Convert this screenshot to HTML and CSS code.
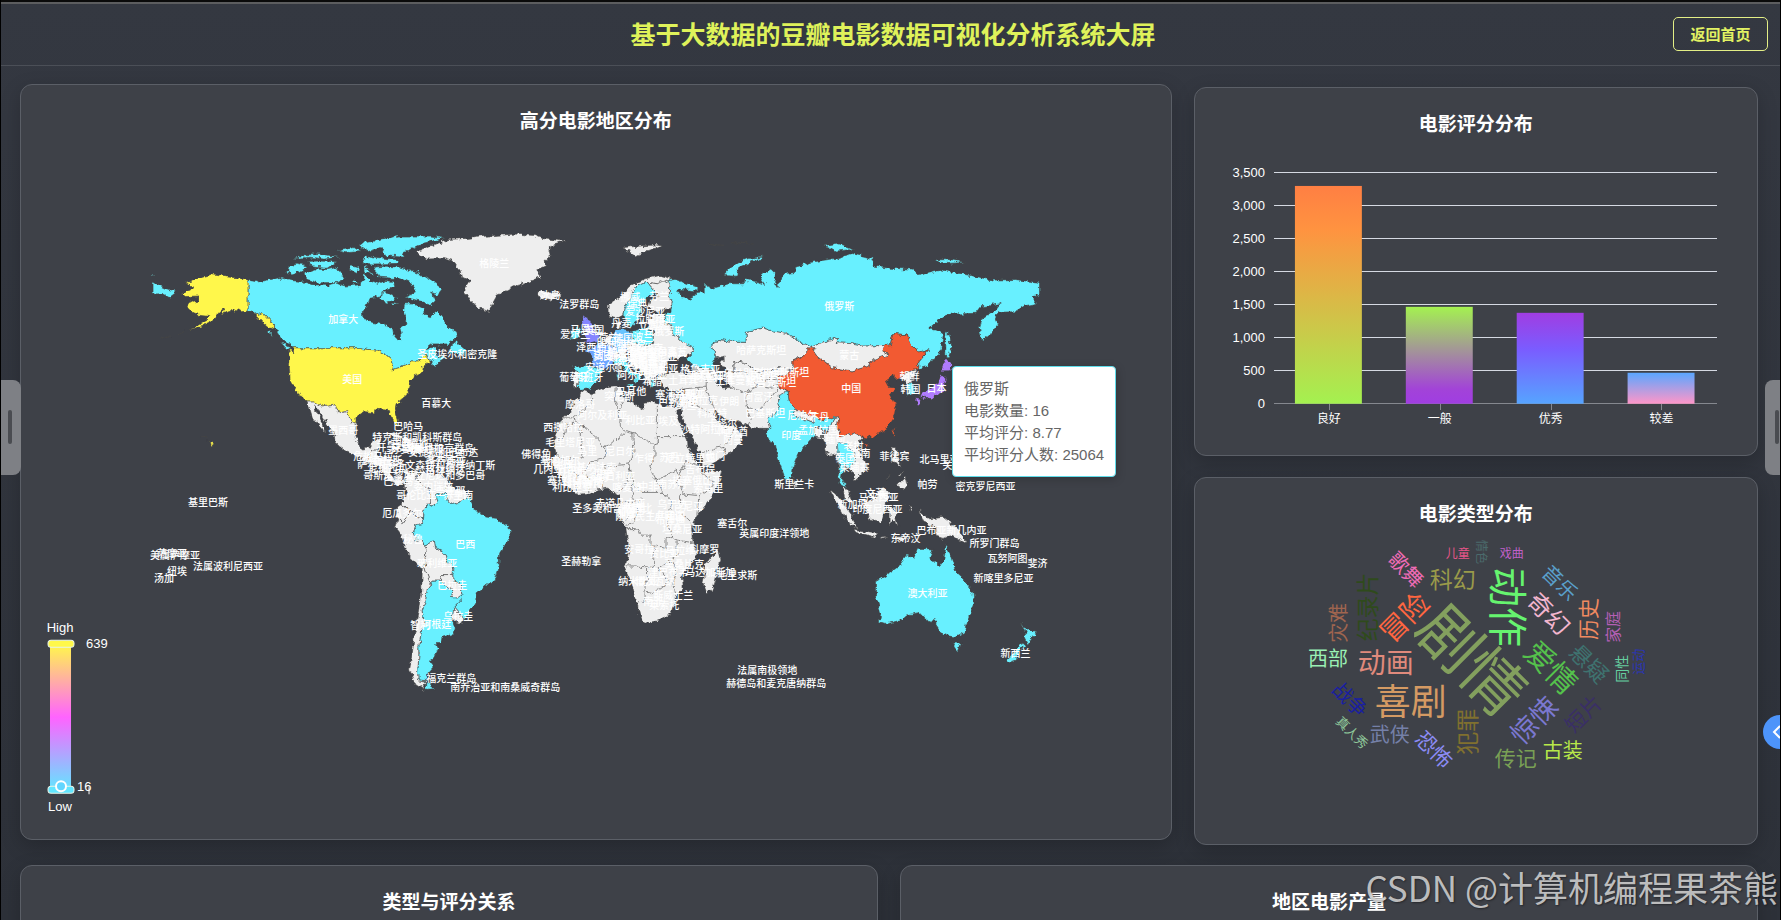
FILE: index.html
```html
<!DOCTYPE html>
<html lang="zh-CN">
<head>
  <meta charset="UTF-8" />
  <meta name="viewport" content="width=device-width, initial-scale=1.0"/>
  <title>基于大数据的豆瓣电影数据可视化分析系统大屏</title>
  <link rel="stylesheet" href="styles.css">
</head>
<body>
  <header class="header">
    <h1>基于大数据的豆瓣电影数据可视化分析系统大屏</h1>
    <button class="back-btn" type="button">返回首页</button>
  </header>

  <main class="main">
    <div class="row row-top">
      <section class="card map-card">
        <h2>高分电影地区分布</h2>
        <svg class="chart" viewBox="45 133 1101 681">
          <defs>
            <filter id="coast" x="-5%" y="-5%" width="110%" height="110%">
              <feTurbulence type="fractalNoise" baseFrequency="0.18" numOctaves="3" seed="4"/>
              <feDisplacementMap in="SourceGraphic" scale="6" xChannelSelector="R" yChannelSelector="G"/>
            </filter>
            <linearGradient id="visual" x1="0" y1="0" x2="0" y2="1">
              <stop offset="0" stop-color="#fff84a"/>
              <stop offset="0.5" stop-color="#ff63ff"/>
              <stop offset="1" stop-color="#62e6ff"/>
            </linearGradient>
          </defs>

          <!-- paths are lon/lat, the group projects them -->
          <g filter="url(#coast)">
            <g class="land" transform="translate(595.5 507.7) scale(2.464 -3.285)">
              <!-- north america -->
              <path class="hot" d="M-141,69.6L-143,70L-148,70.5L-152,70.8L-156.5,71.3L-162,70.2L-163,69.5L-166,68.8L-163.5,67.5L-164,66.6L-168,65.6L-166,64.6L-161,64.8L-161,63.6L-165,62.8L-166,61.5L-164,60L-162,59L-158.5,58.7L-157,58.5L-158,57.5L-161,56L-164.5,54.6L-160,55.5L-156,57.2L-154,58.5L-153.5,59.5L-151.5,61L-150,61.2L-152,59.3L-148.5,60L-146,60.7L-143.5,60L-141,60.2Z"/>
              <path class="low" d="M-141,69.6L-137,69L-133,69.6L-128,70.4L-124,69.5L-119,69.2L-115,68.2L-109,68L-106,68.7L-101,67.8L-96,68.2L-94,69.5L-94,71.8L-91,69.5L-88,68.5L-85.5,69.5L-82,69.2L-81.5,67.5L-86,66.3L-87,64.8L-92,64L-93,62L-94.7,60L-94.5,58.8L-92.5,57L-88,56.5L-82.3,55L-82,53L-80.5,51.5L-79,51.3L-78.8,53L-79.5,54.8L-76.6,56.5L-77,58.5L-78,60.5L-77.6,62.4L-73.5,62.3L-70,61L-69.5,58.9L-67,58.5L-64.6,60.3L-62,57.8L-60,55.5L-57,54L-55.7,52.5L-60,50.2L-66,50.2L-69,48.5L-65,49L-64.5,47.5L-64,46.2L-61,46L-61.5,45.5L-65.5,43.6L-66.5,45L-67.8,45.7L-69,47.3L-70.5,46L-71.5,45L-74.8,45L-76.5,44L-79.2,43.4L-79,42.8L-83,42L-82.4,43.5L-83,45.5L-85,46.8L-88.5,48.3L-92,48.5L-95,49L-123,49L-125,50.5L-127.8,52L-129.5,54L-130,55.5L-131.5,56.7L-133.5,58.4L-135.3,59.7L-137.5,59L-139.5,60.2L-141,60.2Z"/>
              <path class="hot" d="M-141,60.2L-139.5,59.8L-137,58.4L-135,56.8L-132,54.8L-130,55.5L-131.5,56.7L-133.5,58.4L-135.3,59.7L-137.5,59Z"/>
              <path class="low" d="M-128,50.7L-125,49.7L-123.5,48.4L-125.5,48.8ZM-133,54L-131.7,54L-131.2,52.3ZM-59.4,47.8L-57,51L-55.5,50L-53,48.5L-53,46.8L-56,47.2ZM-64,49.8L-62,49.3L-64,49.5Z"/>
              <path class="low" d="M-125,72L-123,71.2L-120,72L-117,73.5L-121,74.4L-124.5,74ZM-117,70.8L-119,71.8L-114,73L-109,72.8L-105,73.6L-102,70L-105,68.9L-113,68.8L-117,69.8ZM-115,73.6L-109,73.2L-105,75.2L-112,75.4L-117,75.3ZM-123,76L-116,76.6L-110,76L-104,76.6L-110,77.4L-118,77.3ZM-100,73L-97,71.6L-96,73.3L-99,74ZM-95,74.7L-93,77L-89,76.5L-80,75.8L-80,74.7L-90,74.5ZM-105,78.8L-100,78L-95,78.3L-98,79.8ZM-96,80L-92,78.3L-87,79.5L-85,77L-78,76.6L-79,78L-74,79.3L-70,80.8L-61,82.4L-67,83L-80,83L-88,82L-94,81.3ZM-94,74L-90,71.3L-94,72ZM-90,73.6L-85,73.8L-80,73.6L-75,72.5L-70,71L-67,69.6L-62,66.8L-64,65L-67,66L-65,63L-66.5,62L-71,63.2L-77.5,64.4L-74,65.5L-73,67.5L-76,69L-79,70L-88,70.5L-89,72ZM-86.5,66L-84,65.8L-80.5,64L-84,63L-87,63.6ZM-98,69.8L-96,69L-99,68.8ZM-83,62.8L-80,62L-82.5,62Z"/>
              <path d="M-73,78.2L-68,79.5L-65,80.5L-60,82L-52,82.3L-44,83L-33,83.6L-25,83.2L-22,82.3L-12,81.4L-18,80.2L-19,78.5L-18.5,77L-21,75.2L-20,74L-24,72.5L-22,70.6L-27,69L-32,68L-37,66L-40,65L-41.5,63L-43,60L-48,61L-51,63.5L-53.5,66.5L-51,69.5L-54.5,70.8L-55,72.5L-58,75.3L-62,76.2L-69,76L-71,77Z"/>
              <path class="hot" d="M-122.8,49L-95,49L-94.6,48.7L-92,48.5L-88.5,48.3L-85,46.8L-83,45.5L-82.4,43.5L-83,42L-79,42.8L-79.2,43.4L-76.5,44L-74.8,45L-71.5,45L-70.5,46L-69,47.4L-67.8,45.7L-67,44.8L-70,43.7L-70.7,42.6L-70,41.8L-74,40.6L-74.2,39.5L-75.5,38.5L-76,37L-75.6,35.3L-77.8,34L-81,32L-81.4,30.5L-80,27L-80.5,25.2L-81.7,26L-82.8,28L-84,30L-89,30.3L-89.5,29.2L-94,29.6L-97.3,27.8L-97.2,26L-99.2,26.5L-101,29.6L-102.8,29.3L-104.5,29.6L-106.5,31.8L-111,31.3L-114.8,32.5L-117.2,32.5L-118.5,34L-120.6,34.6L-122,36.8L-124,39.5L-124.3,42.8L-124,46.3L-124.6,48.3L-122.5,47.5Z"/>
              <path class="hot" d="M-156.3,20.2L-154.8,19.5L-156,18.8ZM-160,22L-158,21.4ZM-167,54L-169,53ZM-176,52L-173,52.4Z"/>
              <path d="M-117.2,32.5L-114.8,32.5L-111,31.3L-106.5,31.8L-104.5,29.6L-102.8,29.3L-101,29.6L-99.2,26.5L-97.2,26L-97.8,22.5L-96,19L-94.5,18.2L-92,18.6L-90.5,20.8L-87,21.5L-88,18.5L-89,17.9L-91,17.8L-92.2,14.6L-96,15.8L-101,17.3L-105.5,20L-105.5,22.5L-109,25.6L-112.5,30L-114.7,31.7L-113,29L-110,24.5L-109.5,23L-112,25L-115,28L-116,30.5Z"/>
              <path d="M-92.2,14.6L-91,17.8L-89,17.9L-88.3,18.4L-88.5,15.9L-83.2,15L-83.7,11L-81.5,9L-79.5,9.5L-77.4,8.5L-78,7.5L-80.3,7.3L-83,8.2L-85.7,10L-87.5,13Z"/>
              <path d="M-84.9,21.9L-82,23.1L-77,21.7L-74.2,20.2L-77.5,19.9L-78.5,21.5ZM-74.4,18.4L-73,19.9L-68.4,18.6L-71.5,17.7Z"/>
              <!-- south america -->
              <path d="M-78.8,1.4L-77,4L-77.4,8.5L-75.5,10.8L-71.5,12.4L-73,9L-70,7L-67.5,6.2L-67.2,2L-67,1.2L-69.5,1L-70,-4.3L-70,-2.8L-73,-2.3L-75,-0.2Z"/>
              <path d="M-71.5,12.4L-71.5,10L-70,11.8L-68,10.6L-62,10.6L-60,8.3L-61,6L-60.7,5.2L-64.7,4.2L-64,2.2L-66.3,0.8L-67,1.2L-67.5,6.2L-70,7L-73,9Z"/>
              <path d="M-60,8.3L-57,6L-54,5.8L-51.6,4.2L-54.5,2.3L-58.5,1.3L-59.8,2.5L-60.7,5.2L-61,6Z"/>
              <path d="M-80.3,-3.4L-81,-2L-80,0.8L-78.8,1.4L-75.3,-0.2L-75.5,-1L-78.5,-4.5Z"/>
              <path d="M-80.3,-3.4L-78.5,-4.5L-75.5,-1L-75,-0.2L-73,-2.3L-70,-2.8L-70,-4.3L-73,-5L-74,-7.3L-72.7,-9.8L-70.6,-9.5L-69.5,-11L-68.8,-12.5L-69.5,-17.5L-70.4,-18.3L-76,-14L-79,-8L-81.2,-6Z"/>
              <path d="M-69.5,-17.5L-68.8,-12.5L-69.5,-11L-65.4,-9.7L-65,-12L-60.5,-13.8L-60,-16.2L-57.5,-18L-58,-20L-62,-20L-62.8,-22L-66,-22L-67,-23L-68.5,-20Z"/>
              <path class="low" d="M-51.6,4.2L-50,1.7L-50,0L-48,-0.8L-44.5,-2.5L-40,-2.9L-37,-4.8L-35.2,-5.5L-34.8,-8L-37,-11L-39,-13.5L-39.2,-17.5L-41,-22L-44.5,-23.2L-48.5,-25.8L-48.7,-28.5L-50.3,-30.5L-53.4,-33.8L-57.6,-30.2L-53.8,-27.2L-54.5,-25.5L-54.3,-24L-55.8,-22.3L-58,-22L-58,-20L-57.5,-18L-60,-16.2L-60.5,-13.8L-65,-12L-65.4,-9.7L-69.5,-11L-70.6,-9.5L-72.7,-9.8L-74,-7.3L-73,-5L-70,-4.3L-69.5,1L-67,1.2L-66.3,0.8L-64,2.2L-64.7,4.2L-60.7,5.2L-59.8,2.5L-58.5,1.3L-54.5,2.3Z"/>
              <path class="low" d="M-66,-22L-62.8,-22L-58,-25L-58.5,-27.3L-56,-27.4L-54.5,-25.5L-53.8,-27.2L-57.6,-30.2L-58.3,-34L-57,-36.5L-58,-38.2L-62,-39L-62.5,-41L-65,-41L-63.8,-42.5L-65.3,-45L-67.5,-46.3L-65.8,-48L-69,-50.7L-68.4,-52.3L-72,-52L-72.3,-50L-71.8,-45L-71.8,-42L-71,-38.5L-69.8,-34L-70.5,-31L-69,-27.5L-68.4,-24.5L-67,-23ZM-68.6,-52.7L-65.2,-54.7L-68.6,-54.9Z"/>
              <path d="M-62.8,-22L-62,-20L-58,-20L-58,-22L-55.8,-22.3L-54.3,-24L-54.5,-25.5L-56,-27.4L-58.5,-27.3L-58,-25Z"/>
              <path d="M-57.6,-30.2L-53.4,-33.8L-54.5,-34.9L-58.3,-34Z"/>
              <path d="M-70.4,-18.3L-69.5,-17.5L-68.5,-20L-67,-23L-68.4,-24.5L-69,-27.5L-70.5,-31L-69.8,-34L-71,-38.5L-71.8,-42L-71.8,-45L-72.3,-50L-72,-52L-68.5,-52.4L-70,-54L-69,-55.4L-73,-53.5L-75.5,-49L-74.5,-44L-73.5,-38L-71.5,-31L-70.6,-25Z"/>
              <!-- africa -->
              <path d="M-5.9,35.8L-2,35.1L3,36.8L10,37.3L11,35.5L10.2,34L15,32.4L19,30.3L20,32.5L23,32.6L29,31L34.2,31.3L32.5,29.8L35.5,24L37.2,21L37.5,18.5L39.5,15.5L43,12L43.2,11.3L51.2,11.8L50,8L46,2.5L41.5,-1.8L39.3,-5L39.5,-9L40.6,-12L40.6,-15L35,-20L35.5,-24L32.8,-26L32.5,-28.5L29,-32.5L25.5,-34L20,-34.8L18.4,-34L17,-29.5L14.5,-22.5L11.8,-18L13.5,-12.5L12.2,-6L9,-1L9.6,3.8L8,4.5L4.5,6.3L1,5.8L-2,4.8L-7.5,4.4L-11.5,7L-14.8,10.5L-16.8,12.5L-17.4,14.7L-16.2,17L-17,21L-14.8,25.5L-12.8,28L-9.8,29.8L-9.6,31.5L-6.8,34ZM49.2,-12L50.4,-15.5L49.5,-18L47,-25L45,-25.5L43.5,-22.5L44.3,-19.5L44,-17L46,-15.8Z"/>
              <path class="border" d="M-13,27.7L-8.7,27.7L-8.7,26L-12,26L-12,23.5L-13,21.3L-17,21.3M-8.7,27.7L-5,30L-1.5,32.5L-2,35M-8.7,27.2L-4.8,25L1.2,21L3,19L6,19.5L12,23.5L10,25L9.5,30L11.5,33M-4.8,25L-6.5,25L-5.5,15.5L-9.3,15.5L-12,14.8L-16.2,16.3M8.3,36.9L8,33L9.5,30M25,31.6L25,22L36.8,22M12,23.5L15,23L24,19.5L24,20L25,20L25,22M15,23L15.5,17L13.5,13.7L7,13L4,13.5L3,11L2.7,6.3M24,19.5L24,15.7L22,13L23,11L27.5,5L18.5,5L15,8L14,13M4,19L4,16L0,15L-4,13L-5.5,10.5L-8,10.3L-11,12.3L-12,14.8M13.5,13.7L14,11.5L11.5,7L8.5,4.8M15,8L14.6,5L16,2L9.5,2M23,9L27,9.5L32.5,12L34,9.5M36.5,14.5L34,9.5L33,8L36,4.5L41.9,4L45,5L48,8L43,11L42.5,12.5L36.5,14.5M36,4.5L34,4.2L34,-1L39.3,-4.7M41.9,4L41,-1.8M27.5,5L31,2L29.6,-1.5L29.3,-5L30.8,-8.3L28.5,-9L28.5,-12.5L24,-11L22,-11L22,-8L18,-8L16.5,-6L12.2,-6M11.8,-17.3L18.5,-17.5L23.3,-17.8L24,-11M21,-18L21,-22L20,-22L20,-28.3L17,-28.6M20,-25L23,-25.5L27,-23.7L29.4,-22L31.3,-22.4L33,-19L30,-15.6L27,-17L25.3,-17.8L29.4,-22M30,-15.6L33,-14L33,-9.5L40.5,-10.5M31.3,-22.4L32,-26.8M30.8,-8.3L33,-9.5M18,3.5L17,-1L15.5,-4.5L12.5,-5M14,2L14,-2L11.5,-3.8M-2.8,5L-3,10L-5.5,10.5M0.5,6L0,11L3,11.5M-8,10.3L-8,7L-7.5,4.4"/>
              <!-- middle east and central asia -->
              <path d="M26,40L29,41.2L33,42L37,41L41.5,41.6L40,43.5L44,42.7L48.5,41.9L50,40.3L49,38L51,36.8L54,37L53.5,40L53,42L56,41.5L56,45L61,44L66,42L70.5,42L74,43L80,42L74,40L74,37.5L78,35.5L74,34.5L74.5,31L70,27.5L71,24.5L67,24.5L61.5,25.2L57,27L54,26.6L51,28.5L48.5,30L48,29L50,26.5L51.5,25.8L52,24L56,26L56.5,24.5L59.8,22.3L57,19L55,17.2L52,15.6L45,12.8L43.3,12.7L42.7,16.5L39,21.5L35,28L34.3,31.3L36,36.5L32,36L28,36.7L26.5,38.5Z"/>
              <path class="border" d="M36,36.5L42,37L44.8,37L44.8,40L41.5,41.6M44.8,37L46,34L48.5,30M42,37L41,34.5L36,32.3L35,29.5M41,34.5L39,32L42,31L46.5,29L48,29M43,17L48,18.5L52,19L55,22L56,24M52,19L53,16.5M61,35.5L61,31L63,27.2L61.5,25.2M54,37L61,35.5L66,37.5L71,37L74,37.5M61,31L66,30L70,33L74.5,37M56,41.5L60,42L66,37.5M66,42L68,39L74,40M44,42.7L46.5,41.5L49,38"/>
              <path d="M50,51.6L55,51L61,51L61,54L68,55L73,54L77,53.5L83,51L87.5,49.2L83,46L80,45L80,42L74,43L70.5,42L66,42L61,44L56,45L56,41.5L53,42L50.5,44.5L53,46.5L49,46L47,50Z"/>
              <!-- russia -->
              <path class="low" d="M30,69.6L32,69.9L41,67.5L41,66.3L34,66.8L33,66.5L35,64.3L38,64L40,64.8L40.5,65.8L44,66L44,68.5L46,68L47,67L54,68.5L60,68.5L61,69.8L66,69L68.5,68.3L67,70L68,71.5L71,73L73,71.5L72.5,69L74,67L74,68.5L76,71.5L81,72L81,73.5L87,75L98,76.3L104,77.7L113,76L112,74L119,73.2L128,73L131,71L140,72.7L152,71L161,69.6L170,69.8L180,68.9L180,65L177,64.5L179,62.5L174,61.8L170,60L163.5,59.8L162,57.8L163,56L160,53L156.7,51L155.6,55L156.7,57.8L162,60.5L164,62.5L160,61.8L156,61.5L154,59.5L142,59.2L135.5,54.8L139,54L141,53L140,48.5L135,43.5L131,42.6L131,45L135,48.4L131,47.7L127.5,50L126,53L121,53.3L120,50L117,49.7L108,49.5L103,50.3L98,50.5L98,52L92,50.7L87.5,49.2L83,51L77,53.5L73,54L68,55L61,54L61,51L55,51L50,51.6L47,50L49,46L47.5,44L48.5,41.9L44,42.7L40,43.5L37,45.5L39,47.2L39.8,49L35.5,50.5L33,52.3L31,53.5L30.8,55.8L28,56.5L27.5,59.3L30,60L30.5,61.5L31,63L29.8,65L30,67.5L28.5,68.8Z"/>
              <path class="low" d="M142,54L143.5,53L144.5,49L143,46L142,46ZM52,71L55,73.5L60,75.8L68,77L66,76L58,73.5L57,70.8ZM92,80L98,80.8L105,79L98,78.5ZM138,75.8L144,75.8L150,75L140,74.6ZM-180,69L-175,67.2L-170,66L-173,64.3L-176,65.5L-180,65.3ZM45,80.5L52,80.2ZM55,81L64,80.6ZM-180,71.4L-178,71.2L-180,70.9ZM20,55L22.5,55L21,54.3Z"/>
              <!-- east asia -->
              <path class="cn" d="M87.5,49.2L90,46.5L96,43L104,42L111,43.5L112,45L119,47L116,48L117,49.7L120,50L121,53.3L126,53L127.5,50L131,47.7L135,48.4L131,45L131,42.6L126,41.5L124,40L121.5,39L121.5,40.8L117.8,39L119,37.3L122.5,37L119.5,35L121.8,31.5L121,28L118,24.5L113,22.2L110,21.3L108,21.6L105,23.2L102,22.3L99,22L98,25L98.5,28L92,27L86,28L81,30.3L78.5,32.5L78,35.5L74,37.5L74,40L80,42L80,45L83,46ZM109,20L111,20L109.8,18.3ZM121.5,25.2L120.2,23L120.9,22Z"/>
              <path d="M87.5,49.2L92,50.7L98,52L98,50.5L103,50.3L108,49.5L117,49.7L116,48L119,47L112,45L111,43.5L104,42L96,43L90,46.5Z"/>
              <path d="M124.3,40L126,41.5L130.5,42.4L127.5,39.5L128.4,38.6L126.5,37.8Z"/>
              <path class="low" d="M126.5,37.8L128.4,38.6L129.4,36L128.5,35L126.3,34.6Z"/>
              <path class="jp" d="M130.9,34.1L133,35.5L136.5,37L139,38.2L140,41L142,39.5L140.9,36L139,34.7L135.7,33.5L134,34.6ZM130,33.5L131.8,33.3L131,31.3L130,31.6ZM132.5,34L134.5,34.2L133,32.8ZM140,42L141.8,45.4L145.3,43.6L143,42Z"/>
              <path class="low" d="M74,34.5L77,35.5L78,35.5L78.5,32.5L81,30.3L80,28.8L88,26.4L88.2,28L92,27L97.3,28L94,24L92,24L90,25.3L88.5,25L89,21.8L87,21L82,16.5L80.2,13.5L79.8,10.2L77.5,8L74,15L72.8,20L70,21L69,23L71,24.5L70,27.5L74.5,31Z"/>
              <path d="M80,28.8L81,30.3L88.2,28L88,26.4ZM88.5,25L92,24L92,21.5L89,21.8Z"/>
              <path d="M92,21.5L94,24L97.3,28L98.5,28L98,25L99,22L102,22.3L105,23.2L108,21.6L106,19L109,14L109,11.5L105,8.7L105,10.5L102.5,12L100,16L98.5,16L98.7,10.5L97.6,16.5L94.3,16Z"/>
              <path class="low" d="M98,20L101,20L104.5,17.5L105.5,14.5L102.7,12.3L100.8,13L100,9L102,6.3L98.5,8L99,12L98.5,16Z"/>
              <path d="M100.3,6.5L102,6.3L104,1.5L101,3ZM95.3,5.6L98,4L104,-2L106,-6L102,-4ZM105,-6.2L114.5,-7.5L114.3,-8.7L106,-7.2ZM109,1.5L113,3L117,7L119,5L117.8,1L116,-4L111,-3ZM119,-5.5L119,0L125,1.5L120.5,0L123,-1L121.5,-2L122.5,-5L120.5,-3ZM131,-0.5L135,-3L141,-2.6L147,-6L150.5,-10.5L144,-7.8L141,-9L138,-8.3L138,-5.5L133,-4ZM120.5,18.5L122,18.3L121.8,16L124,13L120.5,14.5ZM122,7L125.5,9.7L126.3,7L125,5.8ZM117.3,8.4L119.5,11L118,9ZM123,10L125,12L124,10ZM80,9.7L81.8,7.5L80.5,6ZM116,-8.5L119,-8.3L116,-9ZM120,-8.5L127,-8.5L124,-10ZM127.5,1.5L128.5,0L128,-1Z"/>
              <!-- oceania -->
              <path class="low" d="M113.5,-22L117,-20.5L122,-18L126,-14L129,-15L130.5,-12L136.8,-12.2L135.5,-15L139.5,-17.5L141,-16L142.3,-10.8L144,-14.5L146,-19L149,-21L153,-25.5L153.5,-28.5L151,-33.5L150,-37.5L146.5,-39L143,-38.7L140,-37.8L138,-35.5L138,-33L135.7,-34.8L131.5,-31.5L126,-32.3L123.5,-34L118,-35L115,-34.3L115.7,-31.8L113.5,-26.3ZM144.7,-40.8L148.3,-40.9L147,-43.6ZM172.7,-34.5L175,-36.8L178.5,-37.7L177,-39.5L175.2,-41.5L173.8,-39.3L174.8,-38ZM172.8,-40.5L174.2,-41.5L171,-44.3L170.7,-46L168.3,-46.6L166.5,-46L171,-42.7Z"/>
              <!-- europe -->
              <path d="M5,58.5L5,62L10,64.5L14,68L20,70L26,71L31,70L28.5,68.8L25,68.5L20.5,69L16,67.5L14,64L12,61L11.5,59L8,58Z"/>
              <path class="low" d="M11.5,59L12,61L14,64L16,67.5L20.5,69L24,66L21.5,64.5L17.5,61.5L18.8,59.8L16.5,57L14.2,55.5L12.8,56Z"/>
              <path d="M20.5,69L25,68.5L28.5,69.8L30,67.5L29.8,65L31,63L30,61L23,60L21.3,61.5L22,63.5L25.3,65L24,66ZM8.2,57L10.5,57.5L10,55L8.5,55ZM21,57.5L24,59.3L27.5,59.3L28,56.5L30.8,55.8L31,53.5L33,52.3L35.5,50.5L39.8,49L39,47.2L35,46.3L33.5,45L32,46.5L29.5,45.5L28,43.3L28.5,41.3L26,40.7L23.5,40.3L23,38L22.5,36.5L21,38.5L19.5,41L19,42L15,44L13.7,45.2L12.5,46.8L9.5,47.3L7.5,47.5L6,46.3L7,45.8L10,46.5L13.8,46.5L13,48.5L15,51L18.5,50L23,50L23.5,54L21,55.5Z"/>
              <path class="de" d="M7,53.5L9,54.8L14,54L15,51L12.5,50.2L13,48.5L12.5,47.5L7.8,47.6L8,49L6,50Z"/>
              <path class="low" d="M14,54L18.5,54.7L23,54.2L23.5,50.5L18.5,49.8L15,51ZM7,45.8L7.5,44L10,44L12.5,41.8L15.6,40L16,38L18.4,40L14,42.5L12.5,44.5L13.5,45.7L11,46.6ZM12.5,38L15.5,38L15,36.8ZM8.3,41L9.7,40.8L9,39ZM-9,43.3L-1.8,43.4L3.2,42.4L-0.3,39L-2,36.8L-5.6,36L-7.4,37.2L-7,41.8L-8.8,42ZM22,40L24,38.3L22.5,36.7Z"/>
              <path d="M-8.8,42L-7,41.8L-7.4,37.2L-8.9,37.2L-9.4,38.8ZM3.5,51.5L7,53.5L6,50L4,50Z"/>
              <path class="fr" d="M-4.7,48.4L-1.5,48.8L2,51L4,50L8,49L7,47L7,44L3.2,42.4L-1.8,43.4L-1.2,46Z"/>
              <path class="uk" d="M-5.5,50.1L1,51L1.5,52.8L0,53.5L-2,55.5L-2,57.5L-5,58.6L-6,57L-4.8,55L-3,54L-4.8,53L-3.5,51.4Z"/>
              <path class="low" d="M-10,51.6L-6.3,52.2L-6,54L-7.5,55.2L-9.8,54Z"/>
              <path d="M-24,65.5L-22,66.4L-20,65.7L-16,66.3L-13.7,65L-18.5,63.4L-22.5,64ZM11,79.5L18,80L24,80.3L27,80L21,78.5L16.5,76.7L14,78Z"/>
            </g>
          </g>

          <g class="map-label">
            <text x="494" y="262">格陵兰</text>
            <text x="343" y="318">加拿大</text>
            <text x="457" y="353">圣皮埃尔和密克隆</text>
            <text x="352" y="378">美国</text>
            <text x="436" y="402">百慕大</text>
            <text x="408" y="425">巴哈马</text>
            <text x="417" y="436">特克斯和凯科斯群岛</text>
            <text x="343" y="429">墨西哥</text>
            <text x="401" y="442">古巴</text>
            <text x="396" y="446">开曼群岛</text>
            <text x="418" y="442">海地</text>
            <text x="423" y="447">多米尼加</text>
            <text x="405" y="448">牙买加</text>
            <text x="439" y="447">英属维尔京群岛</text>
            <text x="443" y="451">安提瓜和巴布达</text>
            <text x="444" y="456">多米尼克</text>
            <text x="446" y="460">圣卢西亚</text>
            <text x="445" y="464">圣文森特和格林纳丁斯</text>
            <text x="445" y="469">格林纳达</text>
            <text x="445" y="474">特立尼达和多巴哥</text>
            <text x="373" y="455">危地马拉</text>
            <text x="382" y="459">洪都拉斯</text>
            <text x="377" y="463">萨尔瓦多</text>
            <text x="388" y="467">尼加拉瓜</text>
            <text x="388" y="474">哥斯达黎加</text>
            <text x="398" y="480">巴拿马</text>
            <text x="433" y="485">委内瑞拉</text>
            <text x="416" y="494">哥伦比亚</text>
            <text x="450" y="490">圭亚那</text>
            <text x="458" y="494">苏里南</text>
            <text x="402" y="512">厄瓜多尔</text>
            <text x="413" y="538">秘鲁</text>
            <text x="465" y="543">巴西</text>
            <text x="437" y="562">玻利维亚</text>
            <text x="452" y="584">巴拉圭</text>
            <text x="458" y="615">乌拉圭</text>
            <text x="420" y="624">智利</text>
            <text x="436" y="623">阿根廷</text>
            <text x="451" y="677">福克兰群岛</text>
            <text x="505" y="686">南乔治亚和南桑威奇群岛</text>
            <text x="208" y="501">基里巴斯</text>
            <text x="172" y="552">萨摩亚</text>
            <text x="175" y="554">美属萨摩亚</text>
            <text x="228" y="565">法属波利尼西亚</text>
            <text x="177" y="570">纽埃</text>
            <text x="164" y="577">汤加</text>

            <text x="550" y="294">冰岛</text>
            <text x="579" y="303">法罗群岛</text>
            <text x="630" y="296">挪威</text>
            <text x="637" y="302">瑞典</text>
            <text x="659" y="295">芬兰</text>
            <text x="645" y="310">爱沙尼亚</text>
            <text x="621" y="322">丹麦</text>
            <text x="655" y="318">拉脱维亚</text>
            <text x="653" y="324">立陶宛</text>
            <text x="585" y="328">马恩岛</text>
            <text x="575" y="333">爱尔兰</text>
            <text x="594" y="329">英国</text>
            <text x="608" y="336">荷兰</text>
            <text x="623" y="337">德国</text>
            <text x="643" y="336">波兰</text>
            <text x="664" y="330">白俄罗斯</text>
            <text x="591" y="346">泽西岛</text>
            <text x="611" y="342">比利时</text>
            <text x="612" y="346">卢森堡</text>
            <text x="636" y="343">捷克</text>
            <text x="672" y="350">乌克兰</text>
            <text x="603" y="354">法国</text>
            <text x="617" y="351">瑞士</text>
            <text x="618" y="355">列支敦士登</text>
            <text x="631" y="350">奥地利</text>
            <text x="643" y="347">斯洛伐克</text>
            <text x="644" y="353">匈牙利</text>
            <text x="657" y="356">罗马尼亚</text>
            <text x="667" y="351">摩尔多瓦</text>
            <text x="633" y="356">斯洛文尼亚</text>
            <text x="637" y="360">克罗地亚</text>
            <text x="648" y="363">塞尔维亚</text>
            <text x="658" y="367">保加利亚</text>
            <text x="600" y="366">安道尔</text>
            <text x="628" y="366">意大利</text>
            <text x="648" y="370">马其顿</text>
            <text x="588" y="376">西班牙</text>
            <text x="574" y="376">葡萄牙</text>
            <text x="642" y="374">阿尔巴尼亚</text>
            <text x="652" y="380">希腊</text>
            <text x="683" y="379">土耳其</text>
            <text x="700" y="368">格鲁吉亚</text>
            <text x="706" y="374">亚美尼亚</text>
            <text x="713" y="376">阿塞拜疆</text>
            <text x="761" y="349">哈萨克斯坦</text>
            <text x="753" y="372">乌兹别克斯坦</text>
            <text x="779" y="371">吉尔吉斯斯坦</text>
            <text x="771" y="381">塔吉克斯坦</text>
            <text x="740" y="379">土库曼斯坦</text>
            <text x="631" y="390">马耳他</text>
            <text x="619" y="395">突尼斯</text>
            <text x="675" y="393">塞浦路斯</text>
            <text x="690" y="393">叙利亚</text>
            <text x="683" y="397">黎巴嫩</text>
            <text x="678" y="402">巴勒斯坦</text>
            <text x="686" y="404">约旦</text>
            <text x="703" y="399">伊拉克</text>
            <text x="729" y="400">伊朗</text>
            <text x="758" y="396">阿富汗</text>
            <text x="712" y="412">科威特</text>
            <text x="765" y="412">巴基斯坦</text>
            <text x="802" y="414">尼泊尔</text>
            <text x="819" y="416">不丹</text>
            <text x="705" y="428">沙特阿拉伯</text>
            <text x="722" y="422">卡塔尔</text>
            <text x="733" y="430">阿联酋</text>
            <text x="733" y="439">阿曼</text>
            <text x="715" y="455">也门</text>
            <text x="791" y="434">印度</text>
            <text x="818" y="429">孟加拉国</text>

            <text x="580" y="403">摩洛哥</text>
            <text x="602" y="414">阿尔及利亚</text>
            <text x="640" y="419">利比亚</text>
            <text x="668" y="420">埃及</text>
            <text x="563" y="426">西撒哈拉</text>
            <text x="570" y="441">毛里塔尼亚</text>
            <text x="587" y="450">马里</text>
            <text x="620" y="450">尼日尔</text>
            <text x="644" y="457">乍得</text>
            <text x="669" y="456">苏丹</text>
            <text x="690" y="457">厄立特里亚</text>
            <text x="536" y="453">佛得角</text>
            <text x="560" y="459">塞内加尔</text>
            <text x="558" y="463">冈比亚</text>
            <text x="558" y="468">几内亚比绍</text>
            <text x="591" y="466">布基纳法索</text>
            <text x="700" y="468">吉布提</text>
            <text x="572" y="472">几内亚</text>
            <text x="567" y="479">塞拉利昂</text>
            <text x="572" y="486">利比里亚</text>
            <text x="582" y="482">科特迪瓦</text>
            <text x="593" y="480">加纳</text>
            <text x="598" y="476">多哥</text>
            <text x="603" y="473">贝宁</text>
            <text x="615" y="475">尼日利亚</text>
            <text x="627" y="486">喀麦隆</text>
            <text x="648" y="485">中非</text>
            <text x="672" y="483">南苏丹</text>
            <text x="697" y="479">埃塞俄比亚</text>
            <text x="708" y="487">索马里</text>
            <text x="612" y="507">圣多美和普林西比</text>
            <text x="620" y="502">赤道几内亚</text>
            <text x="626" y="511">加蓬</text>
            <text x="635" y="507">刚果</text>
            <text x="650" y="515">刚果民主共和国</text>
            <text x="672" y="503">乌干达</text>
            <text x="688" y="505">肯尼亚</text>
            <text x="669" y="514">卢旺达</text>
            <text x="670" y="519">布隆迪</text>
            <text x="682" y="528">坦桑尼亚</text>
            <text x="639" y="548">安哥拉</text>
            <text x="664" y="552">赞比亚</text>
            <text x="680" y="549">马拉维</text>
            <text x="704" y="548">科摩罗</text>
            <text x="684" y="563">莫桑比克</text>
            <text x="668" y="571">津巴布韦</text>
            <text x="710" y="571">马达加斯加</text>
            <text x="737" y="574">毛里求斯</text>
            <text x="638" y="580">纳米比亚</text>
            <text x="655" y="580">博茨瓦纳</text>
            <text x="673" y="594">斯威士兰</text>
            <text x="653" y="600">南非</text>
            <text x="664" y="604">莱索托</text>
            <text x="581" y="560">圣赫勒拿</text>
            <text x="732" y="522">塞舌尔</text>
            <text x="774" y="532">英属印度洋领地</text>
            <text x="794" y="483">斯里兰卡</text>
            <text x="767" y="669">法属南极领地</text>
            <text x="776" y="682">赫德岛和麦克唐纳群岛</text>

            <text x="839" y="305">俄罗斯</text>
            <text x="849" y="354">蒙古</text>
            <text x="851" y="387">中国</text>
            <text x="909" y="375">朝鲜</text>
            <text x="910" y="388">韩国</text>
            <text x="936" y="387">日本</text>
            <text x="835" y="438">缅甸</text>
            <text x="853" y="445">老挝</text>
            <text x="860" y="452">越南</text>
            <text x="845" y="457">泰国</text>
            <text x="854" y="466">柬埔寨</text>
            <text x="894" y="455">菲律宾</text>
            <text x="954" y="458">北马里亚纳群岛</text>
            <text x="952" y="464">关岛</text>
            <text x="927" y="483">帕劳</text>
            <text x="985" y="485">密克罗尼西亚</text>
            <text x="875" y="492">文莱</text>
            <text x="878" y="496">马来西亚</text>
            <text x="852" y="503">新加坡</text>
            <text x="877" y="508">印度尼西亚</text>
            <text x="951" y="529">巴布亚新几内亚</text>
            <text x="905" y="537">东帝汶</text>
            <text x="994" y="542">所罗门群岛</text>
            <text x="1007" y="557">瓦努阿图</text>
            <text x="1037" y="562">斐济</text>
            <text x="1003" y="577">新喀里多尼亚</text>
            <text x="927" y="592">澳大利亚</text>
            <text x="1015" y="652">新西兰</text>
          </g>

          <g class="visual-map">
            <text x="60" y="631" text-anchor="middle">High</text>
            <rect x="50" y="643" width="21" height="146" fill="url(#visual)"/>
            <rect class="handle" x="48" y="639" width="26" height="7" rx="3" fill="#fff84a"/>
            <rect class="handle" x="48" y="785" width="26" height="7" rx="3" fill="#62e6ff"/>
            <circle class="dot" cx="61" cy="785" r="5" fill="#62d6ff"/>
            <text x="86" y="647">639</text>
            <text x="77" y="790">16</text>
            <path class="tail" d="M89,786V793"/>
            <text x="60" y="810" text-anchor="middle">Low</text>
          </g>
        </svg>
        <div class="tooltip">
          <div>俄罗斯</div>
          <div>电影数量: 16</div>
          <div>平均评分: 8.77</div>
          <div>平均评分人数: 25064</div>
        </div>
      </section>

      <div class="side">
        <section class="card">
          <h2>电影评分分布</h2>
          <svg class="chart" viewBox="1218 136 515 294">
            <defs>
              <linearGradient id="bar1" x1="0" y1="0" x2="0" y2="1"><stop offset="0" stop-color="#ff7f43"/><stop offset="0.2" stop-color="#ff9340"/><stop offset="1" stop-color="#a4f150"/></linearGradient>
              <linearGradient id="bar2" x1="0" y1="0" x2="0" y2="1"><stop offset="0" stop-color="#a4f150"/><stop offset="0.85" stop-color="#a243d8"/><stop offset="1" stop-color="#a03de2"/></linearGradient>
              <linearGradient id="bar3" x1="0" y1="0" x2="0" y2="1"><stop offset="0" stop-color="#a03de2"/><stop offset="0.4" stop-color="#7a5cff"/><stop offset="1" stop-color="#56a4ff"/></linearGradient>
              <linearGradient id="bar4" x1="0" y1="0" x2="0" y2="1"><stop offset="0" stop-color="#5aa6ff"/><stop offset="1" stop-color="#ff96c8"/></linearGradient>
            </defs>
            <path class="grid" d="M1273,172H1717M1273,205H1717M1273,238H1717M1273,271H1717M1273,304H1717M1273,337H1717M1273,370H1717"/>
            <path class="axis" d="M1273,403H1717M1329,403V409M1440,403V409M1551,403V409M1661,403V409"/>
            <rect x="1294" y="185" width="67" height="218" fill="url(#bar1)"/>
            <rect x="1405" y="306" width="67" height="97" fill="url(#bar2)"/>
            <rect x="1516" y="312" width="67" height="91" fill="url(#bar3)"/>
            <rect x="1627" y="372" width="67" height="31" fill="url(#bar4)"/>
            <g class="tick" text-anchor="end">
              <text x="1264" y="176">3,500</text>
              <text x="1264" y="209">3,000</text>
              <text x="1264" y="242">2,500</text>
              <text x="1264" y="275">2,000</text>
              <text x="1264" y="308">1,500</text>
              <text x="1264" y="341">1,000</text>
              <text x="1264" y="374">500</text>
              <text x="1264" y="407">0</text>
            </g>
            <g class="category" text-anchor="middle">
              <text x="1328" y="422">良好</text>
              <text x="1439" y="422">一般</text>
              <text x="1550" y="422">优秀</text>
              <text x="1661" y="422">较差</text>
            </g>
          </svg>
        </section>

        <section class="card">
          <h2>电影类型分布</h2>
          <svg class="chart cloud" viewBox="1218 526 515 294">
            <text transform="translate(1470 660) rotate(45)" font-size="62" fill="#83a05e">剧情</text>
            <text transform="translate(1506 606) rotate(90)" font-size="40" fill="#66f46f">动作</text>
            <text transform="translate(1410 702)" font-size="36" fill="#d49a63">喜剧</text>
            <text transform="translate(1385 663)" font-size="28" fill="#e08a7c">动画</text>
            <text transform="translate(1550 667) rotate(45)" font-size="30" fill="#55c24c">爱情</text>
            <text transform="translate(1404 617) rotate(-45)" font-size="28" fill="#ff6640">冒险</text>
            <text transform="translate(1534 720) rotate(-45)" font-size="27" fill="#7b78d0">惊悚</text>
            <text transform="translate(1452 579)" font-size="23" fill="#9a9a4a">科幻</text>
            <text transform="translate(1467 731) rotate(-90)" font-size="23" fill="#80702f">犯罪</text>
            <text transform="translate(1548 613) rotate(45)" font-size="24" fill="#f3b6cf">奇幻</text>
            <text transform="translate(1367 606) rotate(-90)" font-size="23" fill="#2f4a1c">纪录片</text>
            <text transform="translate(1588 618) rotate(-90)" font-size="21" fill="#f08a60">历史</text>
            <text transform="translate(1515 758)" font-size="21" fill="#7aa055">传记</text>
            <text transform="translate(1588 663) rotate(45)" font-size="22" fill="#3f7370">悬疑</text>
            <text transform="translate(1327 658)" font-size="20" fill="#9af0b4">西部</text>
            <text transform="translate(1389 734)" font-size="20" fill="#7580a8">武侠</text>
            <text transform="translate(1433 749) rotate(45)" font-size="21" fill="#8c8cf5">恐怖</text>
            <text transform="translate(1562 750)" font-size="20" fill="#b8e84a">古装</text>
            <text transform="translate(1559 582) rotate(45)" font-size="20" fill="#5aa0cc">音乐</text>
            <text transform="translate(1338 622) rotate(-90)" font-size="20" fill="#a0654f">灾难</text>
            <text transform="translate(1583 713) rotate(-45)" font-size="21" fill="#3a2f66">短片</text>
            <text transform="translate(1405 569) rotate(45)" font-size="20" fill="#ef6cb6">歌舞</text>
            <text transform="translate(1349 699) rotate(45)" font-size="20" fill="#1a1fa0">战争</text>
            <text transform="translate(1613 626) rotate(-90)" font-size="16" fill="#b45fb4">家庭</text>
            <text transform="translate(1621 668) rotate(-90)" font-size="14" fill="#66cfa0">同性</text>
            <text transform="translate(1638 661) rotate(-90)" font-size="13" fill="#2a35b8">运动</text>
            <text transform="translate(1351 732) rotate(45)" font-size="13" fill="#8fc79a">真人秀</text>
            <text transform="translate(1457 553)" font-size="12" fill="#e8558a">儿童</text>
            <text transform="translate(1480 551) rotate(90)" font-size="12" fill="#4b6a6c">情色</text>
            <text transform="translate(1511 553)" font-size="12" fill="#c060c8">戏曲</text>
          </svg>
        </section>
      </div>
    </div>

    <div class="row row-bottom">
      <section class="card tall">
        <h2>类型与评分关系</h2>
      </section>
      <section class="card tall">
        <h2>地区电影产量</h2>
      </section>
    </div>
  </main>

  <button class="pull pull-left" type="button" aria-label="展开左侧"></button>
  <button class="pull pull-right" type="button" aria-label="展开右侧"></button>
  <button class="float-btn" type="button" aria-label="打开侧栏">
    <svg viewBox="0 0 34 34" width="34" height="34"><path d="M17,11L11,17L17,23" fill="none" stroke="#fff" stroke-width="2"/></svg>
  </button>
  <div class="watermark">CSDN @计算机编程果茶熊</div>
</body>
</html>
```
FILE: styles.css
```css
* {
  box-sizing: border-box;
}
body {
  margin: 0;
  height: 100vh;
  overflow: hidden;
  position: relative;
  background: linear-gradient(180deg, #343841 0%, #2d3139 100%);
  border-left: 1px solid #000;
  border-right: 1px solid #000;
  color: #fff;
  font-family: "Liberation Sans", "Noto Sans CJK SC", sans-serif;
}
.header {
  display: flex;
  align-items: center;
  justify-content: center;
  position: relative;
  height: 66px;
  padding: 2px 0 0 5px;
  border-top: 2px solid #0a0a0a;
  border-bottom: 1px solid #4b4f57;
  box-shadow: inset 0 2px 0 #5c5d5f;
}
.header h1 {
  margin: 0;
  font-size: 25px;
  line-height: 36px;
  font-weight: 700;
  color: #dff25a;
}
.back-btn {
  position: absolute;
  right: 12px;
  top: 15px;
  width: 95px;
  height: 34px;
  padding: 0 0 2px;
  border: 1px solid #e3ee86;
  border-radius: 5px;
  background: transparent;
  color: #e2f263;
  font-family: inherit;
  font-size: 15px;
  font-weight: 700;
  cursor: pointer;
}
.main {
  padding: 18px 22px 0 19px;
}
.row {
  display: grid;
  gap: 22px;
  margin-bottom: 20px;
}
.row-top {
  grid-template-columns: 2.04fr 1fr;
  align-items: start;
}
.row-bottom {
  grid-template-columns: 1fr 1fr;
}
.side {
  display: flex;
  flex-direction: column;
  gap: 21px;
  margin-top: 3px;
}
.card {
  position: relative;
  padding: 25px 24px 24px;
  border: 1px solid #5b5f67;
  border-radius: 12px;
  background: #3e4148;
  box-shadow: 0 6px 20px rgba(0, 0, 0, 0.2);
}
.card.tall {
  height: 400px;
}
.card h2 {
  margin: 0;
  font-size: 19px;
  line-height: 24px;
  font-weight: 700;
  text-align: center;
}
.chart {
  display: block;
  width: 100%;
  height: auto;
}

/* map */
.land path {
  fill: #eeeeee;
  stroke: #444;
  stroke-width: 0.6;
  vector-effect: non-scaling-stroke;
}
.land .hot {
  fill: #fff74c;
}
.land .low {
  fill: #68f0ff;
}
.land .cn {
  fill: #f25a30;
}
.land .jp {
  fill: #b07cff;
}
.land .uk {
  fill: #8585ff;
}
.land .fr {
  fill: #6ca4ff;
}
.land .de {
  fill: #67c4ff;
}
.land .border {
  fill: none;
}
.map-label {
  font-size: 10px;
  font-weight: 500;
  fill: #fff;
  text-anchor: middle;
  dominant-baseline: central;
}
.visual-map {
  font-size: 13px;
  fill: #fff;
}
.visual-map .handle {
  stroke: #e8f4e8;
  stroke-width: 1;
}
.visual-map .dot {
  stroke: #fff;
  stroke-width: 2;
}
.visual-map .tail {
  stroke: #fff;
  stroke-width: 1;
}
.tooltip {
  position: absolute;
  left: 81%;
  top: 281px;
  padding: 11px 11px 10px;
  border: 1px solid #5fdcea;
  border-radius: 4px;
  background: #fff;
  color: #666;
  font-size: 15px;
  line-height: 22px;
  white-space: nowrap;
  box-shadow: 1px 2px 10px rgba(0, 0, 0, 0.2);
}

/* bar chart */
.grid {
  stroke: #d5d9e2;
  stroke-width: 1;
  shape-rendering: crispEdges;
}
.axis {
  stroke: #85888f;
  stroke-width: 1;
  shape-rendering: crispEdges;
}
.tick {
  font-size: 13px;
  fill: #fff;
}
.category {
  font-size: 12px;
  fill: #fff;
}

/* word cloud */
.cloud text {
  text-anchor: middle;
  dominant-baseline: central;
}

.pull {
  position: absolute;
  top: 380px;
  width: 20px;
  height: 95px;
  padding: 0;
  border: none;
  background: #7e8085;
}
.pull::after {
  content: "";
  position: absolute;
  top: 30px;
  left: 7px;
  width: 4px;
  height: 34px;
  border-radius: 2px;
  background: #4a4c51;
}
.pull-left {
  left: 0;
  border-radius: 0 8px 8px 0;
}
.pull-right {
  right: -5px;
  border-radius: 8px 0 0 8px;
}
.pull-right::after {
  left: 10px;
}
.float-btn {
  position: absolute;
  right: -17px;
  top: 715px;
  width: 34px;
  height: 34px;
  padding: 0;
  border: none;
  border-radius: 50%;
  background: #4d94fa;
}
.float-btn svg {
  display: block;
}
.watermark {
  position: absolute;
  right: 2px;
  bottom: 7px;
  font-family: "Noto Sans CJK SC", sans-serif;
  font-size: 35px;
  line-height: 52px;
  color: rgba(215, 215, 215, 0.85);
  text-shadow: 1px 1px 2px rgba(0, 0, 0, 0.4);
  pointer-events: none;
}
```
